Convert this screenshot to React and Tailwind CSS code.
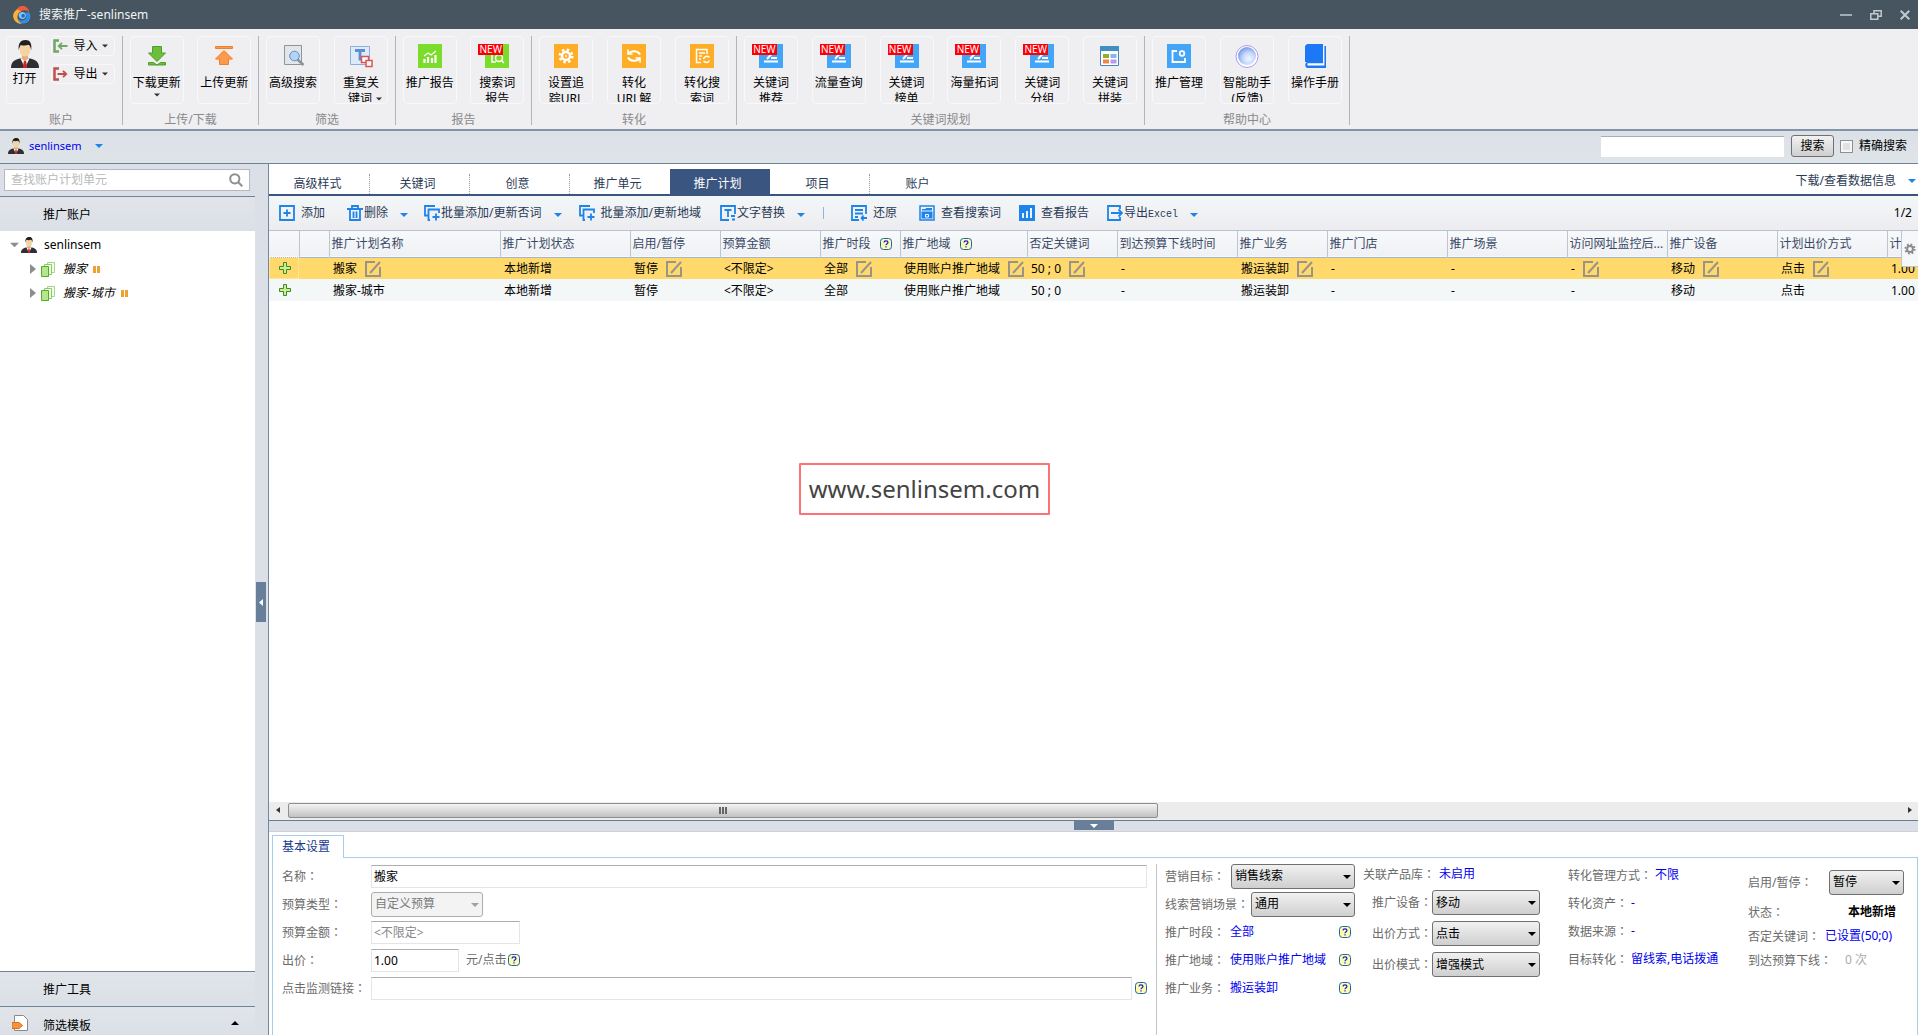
import clsx from 'clsx';

/* ── Icons ─────────────────────────────────────────────────────────── */

function Caret({ className }) {
  return (
    <svg viewBox="0 0 8 4" className={clsx('w-2 h-1 shrink-0', className)} fill="currentColor">
      <path d="M0 0h8L4 4z" />
    </svg>
  );
}

function LogoIcon() {
  return (
    <svg viewBox="0 0 18 18" className="w-[18px] h-[18px]">
      <path d="M9 0c4-.3 7 2.500 7.300 6.500C14.500 4 11 3.300 8 5.500L3.200 4C4.500 1.500 6.500.2 9 0z" fill="#ef5b3c" />
      <path d="M3.200 4C-.8 7-.8 12 2.500 15.500c2 1.800 4 2.500 6.500 2.300C5.500 16 4 13 4.500 10 4.800 8 6 6.300 8 5.500 6.500 4 4.800 3.500 3.200 4z" fill="#fbb03b" />
      <path d="M16.300 6.500C18.500 10 17.500 15 13 17c-4 1.500-8-.8-8.500-5 1.500 2.500 4.500 3.500 7.500 1.500 2-1.500 2-4.500 0-6.500 1.500-.8 3-.8 4.300-.5z" fill="#2f8fe8" />
      <path d="M5.500 9.500C6 6.500 9 5 12 7c1.500 2 1.500 4-.5 5.500-2.500 1.500-5.500 0-6-3z" fill="#7cc4fb" />
      <path d="M8.300 9.800c0-1.500 1.500-2.200 3-1.500 1 1.300.7 2.700-.5 3.300-1.300.5-2.500-.4-2.500-1.800z" fill="#1d6fc0" />
    </svg>
  );
}

function UserIcon({ className }) {
  return (
    <svg viewBox="0 0 28 28" className={clsx('shrink-0', className)}>
      <path d="M0 28c0-6 3-8 9-9.500h10c6 1.500 9 3.500 9 9.500z" fill="#2e2f33" />
      <path d="M9.500 18.500 14 28l4.500-9.500z" fill="#fff" />
      <path d="m13 20-1.200 8h4.400L15 20z" fill="#d3222a" />
      <path d="M11 14h6v5l-3 2.500-3-2.500z" fill="#e0b07c" />
      <ellipse cx="14" cy="9.500" rx="5.500" ry="7" fill="#f6d3a4" />
      <path d="M7.800 10C6.800 3 10 0 14.500 0S21 3 20.200 10c-.7-3-1.500-4.500-2.500-5.200-2.700 1-6 .9-7.900.2C8.800 6 8.300 8 7.800 10z" fill="#22201f" />
    </svg>
  );
}

function BracketArrow({ out }) {
  return (
    <svg viewBox="0 0 15 14" className="w-[15px] h-[14px]" fill="none" stroke={out ? '#c0504d' : '#6fa765'} strokeWidth="2.500">
      <path d="M6 1.500H1.500v11H6" />
      {out ? <path d="M4.500 7H13M10 3.800 13.300 7 10 10.200" strokeWidth="1.800" /> : <path d="M14.500 7H6M9 3.800 5.700 7 9 10.200" strokeWidth="1.800" />}
    </svg>
  );
}

function DownloadBig() {
  return (
    <svg viewBox="0 0 24 24" className="w-6 h-6" fill="#6cbf3a" stroke="#4f9e2a">
      <path d="M7.500 2.500h9V9h4L12 17.500 3.500 9h4z" />
      <path d="M3.500 18.500h5L12 21l3.500-2.500h5v2.500h-17z" />
    </svg>
  );
}

function UploadBig() {
  return (
    <svg viewBox="0 0 24 24" className="w-6 h-6" fill="#fb9a4b" stroke="#f07f2a">
      <path d="M3.500 2.500h17v2h-17z" />
      <path d="M7.500 20.500h9V15h4L12 6.500 3.500 15h4z" />
    </svg>
  );
}

function AdvancedSearchIcon() {
  return (
    <svg viewBox="0 0 24 24" className="w-6 h-6" fill="none">
      <path d="M3.500 1.500h17v19h-17z" fill="#e3e6e9" stroke="#8e9499" />
      <path d="m16 15 6.500 6" stroke="#8d9399" strokeWidth="2.500" />
      <circle cx="13.500" cy="12" r="4.800" fill="#b5d3f3" stroke="#5b8fce" />
    </svg>
  );
}

function DuplicateIcon() {
  return (
    <svg viewBox="0 0 24 24" className="w-6 h-6" fill="none">
      <path d="M1.500 2.500h19v18h-19z" fill="#dceafa" stroke="#8aaedd" />
      <path d="M6 6.500h10M11 6.500v10" stroke="#5c8fd6" strokeWidth="2.800" />
      <path d="M12.500 12.500h7v6h-7z" fill="#fff" stroke="#e05252" strokeWidth="1.500" />
      <path d="M17 16.500h6v6h-6z" fill="#fff" stroke="#e05252" strokeWidth="1.500" />
    </svg>
  );
}

function ReportIcon() {
  return (
    <svg viewBox="0 0 24 24" className="w-6 h-6" fill="none" stroke="#fff">
      <path d="M0 0h24v24H0z" fill="#7bdc2b" stroke="none" />
      <path d="M6.500 19v-4M10 19v-6M14 19v-5M17.500 19V11" strokeWidth="2.200" />
      <path d="m6 12 4-3 3 2 5-4" strokeWidth="1.300" />
    </svg>
  );
}

function NewBadge() {
  return (
    <span className="absolute -left-[7px] top-0 h-[11px] w-[25px] bg-[#fb0007] text-center text-[10px] leading-[11px] text-white">NEW</span>
  );
}

function SearchReportIcon() {
  return (
    <span className="relative block">
      <svg viewBox="0 0 24 24" className="w-6 h-6" fill="none" stroke="#fff" strokeWidth="1.500">
        <path d="M0 0h24v24H0z" fill="#7bdc2b" stroke="none" />
        <path d="M7 6v12h4" />
        <circle cx="14" cy="14" r="3.500" />
        <path d="m16.500 16.500 2.500 2.500" />
      </svg>
      <NewBadge />
    </span>
  );
}

function NewPenIcon() {
  return (
    <span className="relative block">
      <svg viewBox="0 0 24 24" className="w-6 h-6" fill="none" stroke="#fff">
        <path d="M0 0h24v24H0z" fill="#43a5f8" stroke="none" />
        <path d="M5 17.500h14M12 14h6M8 15l8-9" strokeWidth="2" />
      </svg>
      <NewBadge />
    </span>
  );
}

function GearBig() {
  return (
    <svg viewBox="0 0 24 24" className="w-6 h-6" fill="none" stroke="#fff">
      <path d="M0 0h24v24H0z" fill="#fdae26" stroke="none" />
      <circle cx="12" cy="12" r="4" strokeWidth="2.500" />
      <circle cx="12" cy="12" r="6.300" strokeWidth="2.400" strokeDasharray="2.480 2.470" />
      <circle cx="12" cy="12" r="1" fill="#fff" stroke="none" />
    </svg>
  );
}

function RefreshBig() {
  return (
    <svg viewBox="0 0 24 24" className="w-6 h-6" fill="none" stroke="#fff" strokeWidth="2">
      <path d="M0 0h24v24H0z" fill="#fdae26" stroke="none" />
      <path d="M18 10.500A6.500 5 0 0 0 6.500 9.500M6 13.500a6.500 5 0 0 0 11.500 1" />
      <path d="M6 5.500v4.500h4.500M18 18.500V14h-4.500" strokeWidth="1.700" />
    </svg>
  );
}

function DocRefresh() {
  return (
    <svg viewBox="0 0 24 24" className="w-6 h-6" fill="none" stroke="#fff" strokeWidth="1.500">
      <path d="M0 0h24v24H0z" fill="#fdae26" stroke="none" />
      <path d="M11 18.500H6.500v-13H17V10M9 9h6M9 12h3M9 15h2" />
      <path d="M19.500 13.500a3.500 3.500 0 0 0-6 1.500M13.500 17a3.500 3.500 0 0 0 6-.5" />
    </svg>
  );
}

function GridIcon() {
  return (
    <svg viewBox="0 0 24 24" className="w-6 h-6" fill="none">
      <path d="M2.500 2.500h18v19h-18z" fill="#fff" stroke="#4a86b5" />
      <path d="M2 2h19v5H2z" fill="#3f8fc4" />
      <path d="M5 10h6v4H5z" fill="#96ad2b" />
      <path d="M12.500 10h6v4h-6z" fill="#86b7ec" />
      <path d="M5 15.500h6v4H5z" fill="#f58345" />
      <path d="M12.500 15.500h6v4h-6z" fill="#b79af0" />
    </svg>
  );
}

function ManageIcon() {
  return (
    <svg viewBox="0 0 24 24" className="w-6 h-6" fill="none" stroke="#fff" strokeWidth="1.800">
      <path d="M0 0h24v24H0z" fill="#43a5f8" stroke="none" />
      <path d="M10 7H5.500v11H18v-4" />
      <circle cx="15" cy="9.500" r="2.300" />
    </svg>
  );
}

function OrbIcon() {
  return (
    <svg viewBox="0 0 24 24" className="w-6 h-6">
      <defs>
        <radialGradient id="orb" cx="0.600" cy="0.650" r="0.700">
          <stop offset="0" stopColor="#f2f7ff" />
          <stop offset="0.500" stopColor="#c3d7f8" />
          <stop offset="1" stopColor="#6f90e8" />
        </radialGradient>
      </defs>
      <circle cx="12" cy="12.500" r="11" fill="#fff" stroke="#a99cf0" />
      <circle cx="12" cy="12" r="9" fill="url(#orb)" />
    </svg>
  );
}

function BookBig() {
  return (
    <svg viewBox="0 0 24 24" className="w-6 h-6">
      <path d="M4 0h16v18H2V2z" fill="#1d78f5" />
      <path d="M20.500 2H23v22H4.500C1.500 24 1.500 18 4.500 18H21z" fill="#1d78f5" />
      <path d="M4.500 19.300h15.700V2h1.200v19.500H4.500z" fill="#fff" />
    </svg>
  );
}

function HelpIcon() {
  return (
    <svg viewBox="0 0 12 12" className="w-3 h-3 shrink-0" role="img" aria-label="帮助">
      <rect x="0.500" y="0.500" width="11" height="11" rx="3" fill="#fffcae" stroke="#1a62ae" />
      <path d="M4 4.500C4 2.300 8 2.300 8 4.500 8 5.700 6 5.700 6 7.300M6 8.300v1.300" fill="none" stroke="#1414e0" strokeWidth="1.200" />
    </svg>
  );
}

function EditIcon() {
  return (
    <svg viewBox="0 0 16 16" className="w-4 h-4 shrink-0" fill="none" stroke="#999489" strokeWidth="2">
      <path d="M10 1H1v14h14V6M5 12 15 1" />
    </svg>
  );
}

function PlusIcon() {
  return (
    <svg viewBox="0 0 12 12" className="w-3 h-3">
      <path d="M4.500.5h3v4h4v3h-4v4h-3v-4h-4v-3h4z" fill="#c8ee98" stroke="#3f8a1c" />
    </svg>
  );
}

function PlanIcon() {
  return (
    <svg viewBox="0 0 14 16" className="w-[14px] h-4" fill="#f3fbe9" stroke="#6cbf45">
      <path d="M6.500 1.500h7v10h-7z" stroke="#a5d68b" />
      <path d="M3.500 3.500h7v10h-7z" stroke="#8bcb69" />
      <path d="M.5 5.500h7v10h-7z" fill="#b5e58f" stroke="#4fae22" />
    </svg>
  );
}

function GearSmall() {
  return (
    <svg viewBox="0 0 12 12" className="w-3 h-3" fill="none" stroke="#8b8b8b">
      <circle cx="6" cy="6" r="2.900" strokeWidth="2" />
      <circle cx="6" cy="6" r="4.600" strokeWidth="2" strokeDasharray="1.800 1.810" />
    </svg>
  );
}

const toolPaths = {
  add: <path d="M1 1h14v14H1zM8 4.500v7M4.500 8h7" />,
  trash: <path d="M0 4h16M3 4v11h10V4M5 3.500V1h6v2.500M6.500 6.500V13M9.500 6.500V13" />,
  batch: <path d="M4 10.500H1V1h10M6 15H4.500V4.500H15V8M12 8.500v7M8.500 12h7" />,
  text: <path d="M9 15H1V1h14v8M4.500 5h7M8 5v7M11 11h4M12 14.500h3" />,
  restore: <path d="M8 15H1V1h14v8M4 5h8M4 8.500h8M4 12h3M16 13h-5M12.500 10.500 10.500 13l2 2.500" />,
  window: (
    <>
      <path d="M1 1h14v14H1z" strokeWidth="1.500" />
      <path d="M2.500 6.500h11v7h-11zM3 4h3l1.500-1H13v2.500H3z" fill="#1c84ea" stroke="none" />
      <path d="M6.500 9.500h3v2.500h-3z" stroke="#fff" strokeWidth="1" />
    </>
  ),
  chart: (
    <>
      <path d="M0 0h16v16H0z" fill="#1c84ea" stroke="none" />
      <path d="M4 13V8M8 13V6M12 13V3" stroke="#fff" />
    </>
  ),
  exit: <path d="M13 4V1H1v14h12v-3M4 8h11M11.500 4.500 15 8l-3.500 3.500" />,
};

function ToolIcon({ name }) {
  return (
    <svg viewBox="0 0 16 16" className="w-4 h-4 shrink-0" fill="none" stroke="#1c84ea" strokeWidth="1.800">
      {toolPaths[name]}
    </svg>
  );
}

/* ── Data ──────────────────────────────────────────────────────────── */

const ribbonGroups = [
  {
    title: '上传/下载',
    width: 'w-[136px]',
    items: [
      { icon: <DownloadBig />, lines: ['下载更新'], caret: 'below' },
      { icon: <UploadBig />, lines: ['上传更新'] },
    ],
  },
  {
    title: '筛选',
    width: 'w-[137px]',
    items: [
      { icon: <AdvancedSearchIcon />, lines: ['高级搜索'] },
      { icon: <DuplicateIcon />, lines: ['重复关', '键词'], caret: 'inline' },
    ],
  },
  {
    title: '报告',
    width: 'w-[136px]',
    items: [
      { icon: <ReportIcon />, lines: ['推广报告'] },
      { icon: <SearchReportIcon />, lines: ['搜索词', '报告'] },
    ],
  },
  {
    title: '转化',
    width: 'w-[205px]',
    items: [
      { icon: <GearBig />, lines: ['设置追', '踪URL'] },
      { icon: <RefreshBig />, lines: ['转化', 'URL解'] },
      { icon: <DocRefresh />, lines: ['转化搜', '索词'] },
    ],
  },
  {
    title: '关键词规划',
    width: 'w-[408px]',
    items: [
      { icon: <NewPenIcon />, lines: ['关键词', '推荐'] },
      { icon: <NewPenIcon />, lines: ['流量查询'] },
      { icon: <NewPenIcon />, lines: ['关键词', '榜单'] },
      { icon: <NewPenIcon />, lines: ['海量拓词'] },
      { icon: <NewPenIcon />, lines: ['关键词', '分组'] },
      { icon: <GridIcon />, lines: ['关键词', '拼装'] },
    ],
  },
  {
    title: '帮助中心',
    width: 'w-[205px]',
    items: [
      { icon: <ManageIcon />, lines: ['推广管理'] },
      { icon: <OrbIcon />, lines: ['智能助手', '(反馈)'] },
      { icon: <BookBig />, lines: ['操作手册'] },
    ],
  },
];

const tabs = ['高级样式', '关键词', '创意', '推广单元', '推广计划', '项目', '账户'];

const columns = [
  { width: 30 },
  { width: 30 },
  { title: '推广计划名称', width: 171 },
  { title: '推广计划状态', width: 130 },
  { title: '启用/暂停', width: 90 },
  { title: '预算金额', width: 100 },
  { title: '推广时段', width: 80, help: true },
  { title: '推广地域', width: 127, help: true },
  { title: '否定关键词', width: 90 },
  { title: '到达预算下线时间', width: 120 },
  { title: '推广业务', width: 90 },
  { title: '推广门店', width: 120 },
  { title: '推广场景', width: 120 },
  { title: '访问网址监控后...', width: 100 },
  { title: '推广设备', width: 110 },
  { title: '计划出价方式', width: 110 },
  { title: '计' },
];

const shared = ['本地新增', '暂停', '<不限定>', '全部', '使用账户推广地域', '50 ; 0', '-', '搬运装卸', '-', '-', '-', '移动', '点击', '1.00'];
const rows = [
  { cells: ['搬家', ...shared], selected: true },
  { cells: ['搬家-城市', ...shared], selected: false },
];
// cell indexes that show the pencil on the selected row
const editable = [0, 2, 4, 5, 6, 8, 11, 12, 13];

/* ── Building blocks ───────────────────────────────────────────────── */

function RibbonButton({ icon, lines, caret }) {
  return (
    <button className="flex h-[68px] w-[54px] flex-col items-center rounded-sm border border-[#f8f8fa] pt-[7px]">
      {icon}
      <span className="mt-[7px] block h-[27px] overflow-hidden whitespace-nowrap text-center leading-4 text-black">
        <span className="block">{lines[0]}</span>
        {lines[1] && (
          <span className={clsx('flex items-center justify-center gap-1', caret && 'pl-2')}>
            {lines[1]}
            {caret === 'inline' && <Caret className="w-[6px]! text-[#333]" />}
          </span>
        )}
        {caret === 'below' && <Caret className="mx-auto mt-[2px] w-[6px]! text-[#333]" />}
      </span>
    </button>
  );
}

function ToolButton({ icon, children, caret, gap = 'gap-[6px]', className }) {
  return (
    <button className={clsx('flex items-center whitespace-nowrap text-[#2a3a55]', gap, className)}>
      <ToolIcon name={icon} />
      {children}
      {caret && <Caret className="ml-[11px] mt-1 text-[#1c84ea]" />}
    </button>
  );
}

function Colon() {
  return <span className="font-['Noto_Sans_CJK_TC',sans-serif]">：</span>;
}

function Field({ label, htmlFor, labelClass, children, className = 'h-6' }) {
  return (
    <div className={clsx('flex items-center', className)}>
      <label htmlFor={htmlFor} className={clsx('shrink-0 whitespace-nowrap text-[#6b6b6b]', labelClass)}>
        {label}
        <Colon />
      </label>
      {children}
    </div>
  );
}

function Select({ id, value, className, disabled }) {
  return (
    <span className={clsx('relative block', className)}>
      <select
        id={id}
        disabled={disabled}
        className={clsx(
          'block h-[25px] w-full appearance-none rounded-[3px] border pl-[3px] pr-5 text-xs',
          disabled
            ? 'border-[#adadad] bg-[#f3f3f3] text-[#7a7a7a]'
            : 'border-[#707070] bg-linear-to-b from-[#f1f1f1] to-[#cfcfcf] text-black',
        )}
      >
        <option>{value}</option>
      </select>
      <Caret className={clsx('pointer-events-none absolute right-1 top-[11px]', disabled ? 'text-[#a0a0a0]' : 'text-black')} />
    </span>
  );
}

function TextInput({ className, ...props }) {
  return (
    <input
      type="text"
      className={clsx(
        'h-[23px] border border-[#e3e5ec] border-t-[#abadb3] bg-white px-[2px] text-black outline-none placeholder:text-[#888]',
        className,
      )}
      {...props}
    />
  );
}

function ValueLink({ children, className }) {
  return (
    <a href="#" className={clsx('whitespace-nowrap text-[#0000f0]', className)}>
      {children}
    </a>
  );
}

/* ── Sections ──────────────────────────────────────────────────────── */

function TitleBar() {
  return (
    <header className="flex h-[29px] shrink-0 items-center bg-[#46555f] pl-[13px] pr-2 text-[#f2f4f5]">
      <LogoIcon />
      <h1 className="ml-2 flex-1">搜索推广-senlinsem</h1>
      <div className="flex items-center gap-[18px] text-[#c3cacf]">
        <button aria-label="最小化">
          <svg viewBox="0 0 12 10" className="w-3 h-[10px]" stroke="currentColor" strokeWidth="1.500"><path d="M0 5h12" /></svg>
        </button>
        <button aria-label="还原">
          <svg viewBox="0 0 12 10" className="w-3 h-[10px]" fill="none" stroke="currentColor" strokeWidth="1.500"><path d="M.8 3.800h7v5.400h-7zM4 3V.8h7.200v5.400H8.500" /></svg>
        </button>
        <button aria-label="关闭">
          <svg viewBox="0 0 10 10" className="w-[10px] h-[10px]" stroke="currentColor" strokeWidth="2"><path d="m.7.7 8.600 8.600M9.300.7.7 9.300" /></svg>
        </button>
      </div>
    </header>
  );
}

function RibbonGroup({ title, width, children }) {
  return (
    <section className={clsx('flex shrink-0 flex-col border-r border-[#b4b4b8]', width)}>
      <div className="flex h-[68px] justify-around">{children}</div>
      <h2 className="mt-2 text-center leading-4 text-[#8a8a8a]">{title}</h2>
    </section>
  );
}

function Ribbon() {
  return (
    <nav className="flex h-[102px] shrink-0 overflow-hidden border-b-2 border-[#8393aa] bg-[#efeef1] pt-[7px] pb-1">
      <RibbonGroup title="账户" width="w-[123px]">
        <button className="ml-[2px] flex h-[68px] w-[38px] flex-col items-center rounded-sm border border-[#f8f8fa] pt-[3px]">
          <UserIcon className="w-7 h-7" />
          <span className="mt-[3px] leading-[15px]">打开</span>
        </button>
        <div className="mr-1 flex flex-col gap-2">
          {['导入', '导出'].map((name) => (
            <button key={name} className="flex h-5 w-[64px] items-center rounded-sm border border-[#f8f8fa] pl-px text-black">
              <BracketArrow out={name === '导出'} />
              <span className="ml-[6px] mr-1">{name}</span>
              <Caret className="w-[6px]! text-[#333]" />
            </button>
          ))}
        </div>
      </RibbonGroup>
      {ribbonGroups.map((group) => (
        <RibbonGroup key={group.title} title={group.title} width={group.width}>
          {group.items.map((item) => (
            <RibbonButton key={item.lines.join('')} {...item} />
          ))}
        </RibbonGroup>
      ))}
    </nav>
  );
}

function AccountBar() {
  return (
    <div className="flex h-[33px] shrink-0 items-center border-b border-[#6f8196] bg-linear-to-b from-[#dbe1e7] to-[#dfe4e8] pb-[2px] pl-2 pr-[11px]">
      <UserIcon className="w-4 h-4" />
      <a href="#" className="ml-[5px] text-[11px] text-[#0000f0]">senlinsem</a>
      <Caret className="ml-[13px] text-[#1c84ea]" />
      <input type="text" aria-label="搜索内容" className="ml-auto mr-[7px] h-[21px] w-[183px] border-t border-[#abadb3] bg-white px-1 outline-none" />
      <button className="h-[22px] w-[43px] rounded-[3px] border border-[#707070] bg-linear-to-b from-[#f2f2f2] to-[#cfcfcf] text-black">搜索</button>
      <label className="ml-[6px] flex items-center gap-[6px] text-black">
        <input type="checkbox" className="h-[13px] w-[13px] appearance-none border border-[#8e8f8f] bg-[#dfe2e5] shadow-[inset_0_0_0_2px_#f6f6f6]" />
        精确搜索
      </label>
    </div>
  );
}

function Sidebar() {
  const header = 'flex h-[35px] shrink-0 items-center border-t border-[#6f8499] bg-linear-to-b from-[#e1e5ea] to-[#dbe0e6] pl-[43px] pt-[2px] text-black';
  return (
    <aside className="flex w-[255px] shrink-0 flex-col bg-[#dbe0e8]">
      <div className="flex h-8 shrink-0 items-center pl-1 pr-[5px]">
        <div className="flex h-[22px] flex-1 items-center border border-[#b5b9be] bg-white px-[6px]">
          <input type="text" aria-label="查找" placeholder="查找账户计划单元" className="min-w-0 flex-1 outline-none placeholder:text-[#b9b9b9]" />
          <svg viewBox="0 0 14 14" className="w-[14px] h-[14px]" fill="none" stroke="#8f8f8f" strokeWidth="2">
            <circle cx="5.800" cy="5.800" r="4.600" />
            <path d="m9.300 9.300 4 4" />
          </svg>
        </div>
      </div>
      <h2 className={header}>推广账户</h2>
      <div className="flex-1 bg-white pt-[2px]">
        <div className="flex h-6 items-center pl-[10px]">
          <Caret className="h-[6px]! w-[9px]! text-[#8d8d8d]" />
          <UserIcon className="ml-[2px] w-4 h-4" />
          <span className="ml-[7px] text-black">senlinsem</span>
        </div>
        {['搬家', '搬家-城市'].map((name) => (
          <div key={name} className="flex h-6 items-center pl-[30px]">
            <svg viewBox="0 0 6 10" className="w-[6px] h-[10px]" fill="#8d8d8d"><path d="M0 0v10l6-5z" /></svg>
            <span className="ml-[5px] mr-2"><PlanIcon /></span>
            <em className="text-black">{name}</em>
            <svg viewBox="0 0 7 7" className="ml-[6px] w-[7px] h-[7px]" fill="#f0a030"><path d="M0 0h3v7H0zM4 0h3v7H4z" /></svg>
          </div>
        ))}
      </div>
      <h2 className={header}>推广工具</h2>
      <h2 className="flex h-[29px] shrink-0 items-center border-t border-[#6f8499] bg-linear-to-b from-[#e1e5ea] to-[#dbe0e6] pl-3 pr-4 pt-[10px] text-black">
        <svg viewBox="0 0 16 16" className="mb-[6px] w-4 h-4">
          <path d="M2.500.5h9l4 4v11h-13z" fill="#fff" stroke="#8a8a8a" />
          <path d="M0 7.500h7l3.500 3-3.500 3H0z" fill="#f7913a" stroke="#d96f17" />
        </svg>
        <span className="ml-[15px] flex-1">筛选模板</span>
        <Caret className="mb-[6px] rotate-180" />
      </h2>
    </aside>
  );
}

function TabBar() {
  return (
    <div className="flex h-8 shrink-0 items-end border-b-2 border-[#3a557f] bg-white pl-px">
      {tabs.map((tab, i) => {
        const active = tab === '推广计划';
        const noRule = active || i === 3 || i === 6;
        return (
          <button
            key={tab}
            className={clsx(
              'flex h-[25px] w-[100px] items-end',
              active ? 'bg-[#3a557f] text-white' : 'text-[#2a3a55]',
            )}
          >
            <span className={clsx('flex h-5 w-full items-center justify-center border-r border-dotted pb-px pr-1', noRule ? 'border-transparent' : 'border-[#9a9a9a]')}>
              {tab}
            </span>
          </button>
        );
      })}
      <button className="ml-auto flex h-full items-center pr-[2px] pt-[3px] text-[#2a3a55]">
        下载/查看数据信息
        <Caret className="ml-3 text-[#1c84ea]" />
      </button>
    </div>
  );
}

function Toolbar() {
  return (
    <div className="flex h-[35px] shrink-0 items-center border-b border-[#b7c3d0] bg-linear-to-b from-[#f3f7f8] to-[#edecf0] pl-[10px] pr-[6px]">
      <ToolButton icon="add">添加</ToolButton>
      <ToolButton icon="trash" gap="gap-px" caret className="ml-[22px]">删除</ToolButton>
      <ToolButton icon="batch" gap="gap-px" caret className="ml-4">批量添加/更新否词</ToolButton>
      <ToolButton icon="batch" className="ml-[17px]">批量添加/更新地域</ToolButton>
      <ToolButton icon="text" gap="gap-px" caret className="ml-[19px]">文字替换</ToolButton>
      <span className="ml-[18px] h-3 w-px bg-[#8fb5dc]" />
      <ToolButton icon="restore" className="ml-[27px]">还原</ToolButton>
      <ToolButton icon="window" className="ml-[22px]">查看搜索词</ToolButton>
      <ToolButton icon="chart" className="ml-[18px]">查看报告</ToolButton>
      <ToolButton icon="exit" gap="gap-px" caret className="ml-[18px]">
        <span>导出<span className="font-['Liberation_Mono',monospace] text-[10px]">Excel</span></span>
      </ToolButton>
      <span className="ml-auto text-black">1/2</span>
    </div>
  );
}

function PlanTable() {
  return (
    <div className="relative flex-1 overflow-hidden bg-white">
      <table className="w-full table-fixed border-collapse whitespace-nowrap">
        <colgroup>
          {columns.map((col, i) => (
            <col key={i} style={col.width ? { width: col.width } : undefined} />
          ))}
        </colgroup>
        <thead>
          <tr className="h-[26px] border-b border-[#a9b5c6] bg-linear-to-b from-[#f7f9fa] to-[#f0f1f5]">
            {columns.map((col, i) => (
              <th key={i} className={clsx('overflow-hidden p-0 pl-[2px] text-left font-normal text-[#3a4a66]', i > 0 && 'border-l border-[#bcc5d2]')}>
                <span className="flex items-center gap-[9px]">
                  {col.title}
                  {col.help && <HelpIcon />}
                </span>
              </th>
            ))}
          </tr>
        </thead>
        <tbody>
          {rows.map((row) => (
            <tr key={row.cells[0]} className={clsx('h-[22px] text-black', row.selected ? 'bg-[#ffd96c]' : 'bg-[#f3f7f8]')}>
              <td className={clsx('p-0 pl-[10px]', row.selected && 'outline-1 -outline-offset-1 outline-dotted outline-[#fff0b8]')}><PlusIcon /></td>
              <td className="p-0" />
              {row.cells.map((cell, i) => (
                <td key={i} className="overflow-hidden p-0 pl-1 pt-px">
                  <span className="flex items-center gap-2">
                    {cell}
                    {row.selected && editable.includes(i) && <EditIcon />}
                  </span>
                </td>
              ))}
            </tr>
          ))}
        </tbody>
      </table>
      <button aria-label="列设置" className="absolute right-0 top-0 flex h-9 w-[17px] items-center justify-center border-l border-b border-[#b8c6d6] bg-[#f5f7fa]">
        <GearSmall />
      </button>
      <div className="absolute left-[32%] top-[41%] -mt-[2px] ml-[2px] rounded-[1px] border-2 border-[#fb7377] px-2 py-[7px] text-2xl leading-[34px] text-[#444]">
        www.senlinsem.com
      </div>
    </div>
  );
}

function ScrollBar() {
  return (
    <div className="flex h-[18px] shrink-0 items-center bg-[#ececec] pb-[2px] pl-[7px] pr-[6px]">
      <svg viewBox="0 0 4 6" className="w-1 h-[6px]"><path d="M4 0v6L0 3z" fill="#333" /></svg>
      <div className="ml-2 mr-2 flex-1">
        <div className="flex h-[15px] w-[54%] items-center justify-center gap-px rounded-[2px] border border-[#8e8e8e] bg-linear-to-b from-[#f3f3f3] to-[#c2c2c4]">
          <span className="h-[7px] w-[2px] bg-[#666]" />
          <span className="h-[7px] w-[2px] bg-[#666]" />
          <span className="h-[7px] w-[2px] bg-[#666]" />
        </div>
      </div>
      <svg viewBox="0 0 4 6" className="w-1 h-[6px]"><path d="M0 0v6l4-3z" fill="#333" /></svg>
    </div>
  );
}

function DetailPane() {
  return (
    <section className="flex h-[203px] shrink-0 flex-col bg-white pl-[3px] pt-[3px]">
      <div className="flex h-[23px] shrink-0">
        <button className="h-[23px] w-[72px] border border-b-0 border-[#a8cdeb] pr-1 text-center text-[#17388f]">基本设置</button>
        <div className="flex-1 border-b border-[#a8cdeb]" />
      </div>
      <div className="flex min-h-0 flex-1 border-x border-[#a8cdeb] pl-[9px] pr-[13px] pt-[6px]">
        <div className="flex min-w-0 flex-1 flex-col gap-1 pr-[9px]">
          <Field label="名称" htmlFor="plan-name" labelClass="w-[89px]">
            <TextInput id="plan-name" defaultValue="搬家" className="min-w-0 flex-1" />
          </Field>
          <Field label="预算类型" htmlFor="budget-type" labelClass="w-[89px]">
            <Select id="budget-type" value="自定义预算" disabled className="w-28" />
          </Field>
          <Field label="预算金额" htmlFor="budget" labelClass="w-[89px]">
            <TextInput id="budget" placeholder="<不限定>" className="w-[149px]" />
          </Field>
          <Field label="出价" htmlFor="bid" labelClass="w-[89px]">
            <TextInput id="bid" defaultValue="1.00" className="mr-[7px] w-[88px]" />
            <span className="mr-[2px] text-[#6b6b6b]">元/点击</span>
            <HelpIcon />
          </Field>
          <Field label="点击监测链接" htmlFor="track-url" labelClass="w-[89px]">
            <TextInput id="track-url" className="mr-[3px] min-w-0 flex-1" />
            <HelpIcon />
          </Field>
        </div>
        <div className="flex w-[199px] shrink-0 flex-col gap-1 border-l border-[#c4c4ca] pl-2">
          <Field label="营销目标" htmlFor="goal">
            <Select id="goal" value="销售线索" className="ml-auto w-[124px]" />
          </Field>
          <Field label="线索营销场景" htmlFor="scene">
            <Select id="scene" value="通用" className="ml-auto w-[104px]" />
          </Field>
          {[['推广时段', '全部'], ['推广地域', '使用账户推广地域'], ['推广业务', '搬运装卸']].map(([label, value]) => (
            <Field key={label} label={label} className="h-6 pr-1">
              <ValueLink className="ml-[5px] flex-1">{value}</ValueLink>
              <HelpIcon />
            </Field>
          ))}
        </div>
        <div className="flex w-[185px] shrink-0 flex-col gap-[6px] pl-2">
          <Field label="关联产品库" className="h-5">
            <ValueLink className="ml-1">未启用</ValueLink>
          </Field>
          {[['推广设备', '移动'], ['出价方式', '点击'], ['出价模式', '增强模式']].map(([label, value]) => (
            <Field key={label} label={label} htmlFor={label} className="h-[25px] justify-end">
              <Select id={label} value={value} className="w-[108px]" />
            </Field>
          ))}
        </div>
        <div className="flex w-52 shrink-0 flex-col gap-2 pl-7 pt-px">
          {[['转化管理方式', '不限'], ['转化资产', '-'], ['数据来源', '-'], ['目标转化', '留线索,电话拨通']].map(([label, value]) => (
            <Field key={label} label={label} className="h-5">
              <ValueLink className="ml-[3px]">{value}</ValueLink>
            </Field>
          ))}
        </div>
        <div className="flex w-[156px] shrink-0 flex-col gap-1 pt-[6px]">
          <Field label="启用/暂停" htmlFor="state" className="mb-1 h-6">
            <Select id="state" value="暂停" className="ml-auto w-[75px]" />
          </Field>
          <Field label="状态" className="h-5 justify-between pr-2">
            <strong className="text-black">本地新增</strong>
          </Field>
          <Field label="否定关键词" className="h-5">
            <ValueLink className="ml-[5px]">已设置(50;0)</ValueLink>
          </Field>
          <Field label="到达预算下线" className="h-5">
            <span className="ml-[13px] text-[#aaa]">0 次</span>
          </Field>
        </div>
      </div>
    </section>
  );
}

export default function App() {
  return (
    <div className="flex h-screen flex-col overflow-hidden bg-[#dbe0e8] font-['Noto_Sans','Noto_Sans_CJK_SC',sans-serif] text-xs text-black">
      <TitleBar />
      <Ribbon />
      <AccountBar />
      <div className="flex min-h-0 flex-1">
        <Sidebar />
        <div className="flex w-[13px] shrink-0 items-center bg-[#dbe0e8] pl-px pt-[5px]">
          <button aria-label="收起侧栏" className="flex h-10 w-[10px] items-center justify-center bg-[#697f99]">
            <svg viewBox="0 0 4 7" className="w-1 h-[7px]" fill="#fff"><path d="M4 0v7L0 3.500z" /></svg>
          </button>
        </div>
        <main className="flex min-w-0 flex-1 flex-col border-l border-[#7487a0]">
          <TabBar />
          <Toolbar />
          <PlanTable />
          <ScrollBar />
          <div className="flex h-3 shrink-0 justify-center border-t border-b border-t-[#677f95] border-b-[#cfcfd4] bg-[#dbe0e8]">
            <button aria-label="收起详情" className="flex h-[9px] w-10 items-center justify-center bg-[#697f99]">
              <Caret className="text-white" />
            </button>
          </div>
          <DetailPane />
        </main>
      </div>
    </div>
  );
}
